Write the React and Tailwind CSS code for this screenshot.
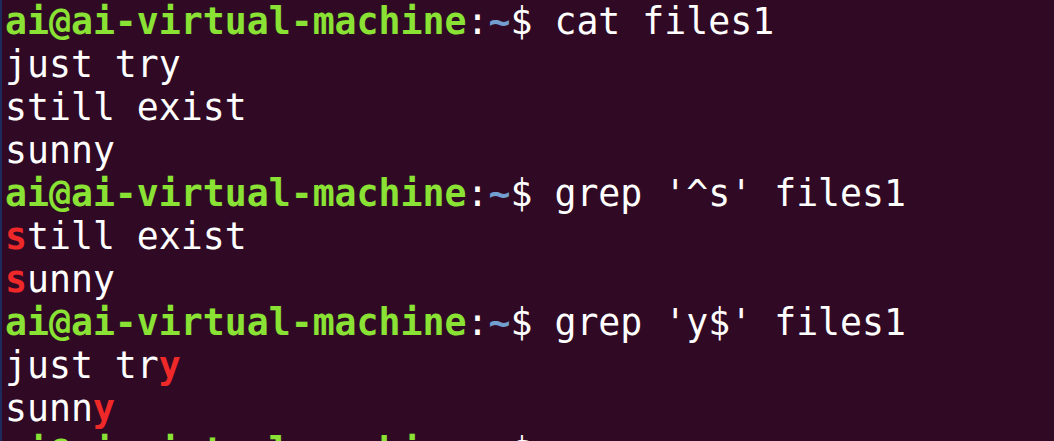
const lines = [
  { prompt: true, cmd: "cat files1" },
  { text: [["just try"]] },
  { text: [["still exist"]] },
  { text: [["sunny"]] },
  { prompt: true, cmd: "grep '^s' files1" },
  { text: [["s", true], ["till exist"]] },
  { text: [["s", true], ["unny"]] },
  { prompt: true, cmd: "grep 'y$' files1" },
  { text: [["just tr"], ["y", true]] },
  { text: [["sunn"], ["y", true]] },
  { prompt: true, cmd: "" },
]

const Prompt = ({ cmd }) => (
  <>
    <span className="font-bold text-[#8ae234]">ai@ai-virtual-machine</span>
    <span>:</span>
    <span className="font-bold text-[#729fcf]">~</span>
    <span>$ {cmd}</span>
  </>
)

export default function App() {
  return (
    <div className="w-[1054px] h-[441px] overflow-hidden bg-[#300a24] border-l-2 border-[#1f2a5c]">
      <div
        className="pl-[3px] text-white whitespace-pre text-[36.5px] leading-[43px]"
        style={{ fontFamily: '"DejaVu Sans Mono", monospace' }}
      >
        {lines.map((l, i) => (
          <div key={i}>
            {l.prompt ? (
              <Prompt cmd={l.cmd} />
            ) : (
              l.text.map(([t, hit], j) => (
                <span key={j} className={hit ? "font-bold text-[#ef2929]" : ""}>
                  {t}
                </span>
              ))
            )}
          </div>
        ))}
      </div>
    </div>
  )
}
